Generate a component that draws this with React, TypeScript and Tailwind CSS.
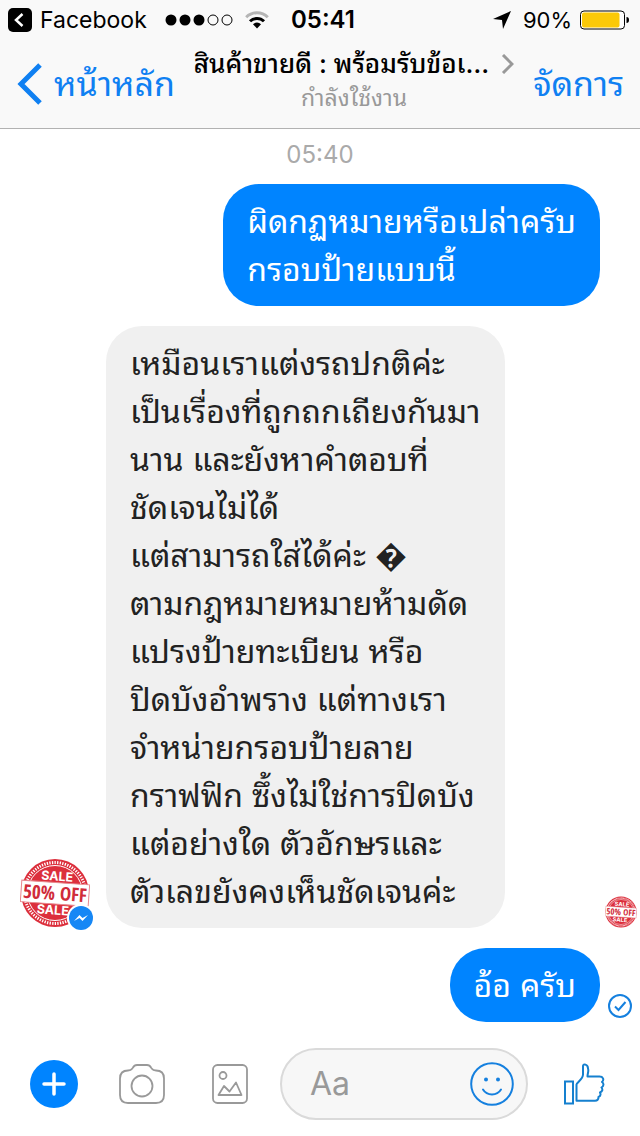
import type { ReactNode } from "react";

type Message = {
  id: number;
  from: "me" | "page";
  lines: string[];
};

const messages: Message[] = [
  { id: 1, from: "me", lines: ["ผิดกฏหมายหรือเปล่าครับ", "กรอบป้ายแบบนี้"] },
  {
    id: 2,
    from: "page",
    lines: [
      "เหมือนเราแต่งรถปกติค่ะ",
      "เป็นเรื่องที่ถูกถกเถียงกันมา",
      "นาน และยังหาคำตอบที่",
      "ชัดเจนไม่ได้",
      "แต่สามารถใส่ได้ค่ะ \uFFFD",
      "ตามกฎหมายหมายห้ามดัด",
      "แปรงป้ายทะเบียน หรือ",
      "ปิดบังอำพราง แต่ทางเรา",
      "จำหน่ายกรอบป้ายลาย",
      "กราฟฟิก ซึ้งไม่ใช่การปิดบัง",
      "แต่อย่างใด ตัวอักษรและ",
      "ตัวเลขยังคงเห็นชัดเจนค่ะ",
    ],
  },
  { id: 3, from: "me", lines: ["อ้อ ครับ"] },
];

function SaleAvatar({ className }: { className: string }) {
  return (
    <svg viewBox="0 0 70 70" className={className} role="img" aria-label="Sale">
      <circle cx="35" cy="35" r="34" fill="#dc2f3c" />
      <circle cx="35" cy="35" r="30.500" fill="none" stroke="#fff" strokeWidth="3" strokeDasharray="1.3 1.3" />
      <circle cx="35" cy="35" r="27.500" fill="none" stroke="#fff" strokeWidth="1" />
      <g transform="rotate(4 35 35)" fontFamily="Inter, sans-serif" fontWeight="700" textAnchor="middle">
        <text x="36" y="22.500" fontSize="12.500" fill="#fff">SALE</text>
        <text x="34" y="56.500" fontSize="12.500" fill="#fff">SALE</text>
        <rect x="1" y="24.500" width="68" height="21.500" fill="#fff" stroke="#e88a90" strokeWidth="1" />
        <text x="35" y="42" fontSize="19" fontFamily="Open Sans Condensed, Open Sans, sans-serif" fill="#d02c3a">50% OFF</text>
      </g>
    </svg>
  );
}

function Bubble({ message }: { message: Message }) {
  const color = message.from === "me" ? "bg-[#0084ff] text-white" : "bg-[#f0f0f0] text-[#222]";
  return (
    <div className={`rounded-[36px] px-6 pt-[14px] pb-3 text-[32px] leading-[48px] ${color}`}>
      {message.lines.map((line) => (
        <p key={line} className="whitespace-nowrap">{line}</p>
      ))}
    </div>
  );
}

function StatusBar() {
  return (
    <div className="grid h-10 grid-cols-[1fr_auto_1fr] items-center pr-[10px] pl-2 text-[23px] leading-none">
      <div className="flex items-center gap-2">
        <svg viewBox="0 0 24 24" className="size-6" aria-hidden="true">
          <rect width="24" height="24" rx="5" />
          <path d="M14.5 6 8 12l6.500 6" fill="none" stroke="#fff" strokeWidth="2.500" />
        </svg>
        <a href="#facebook">Facebook</a>
        <svg viewBox="0 0 68 12" className="ml-[10px] h-3 w-[68px]" aria-hidden="true">
          <circle cx="6" cy="6" r="5.500" />
          <circle cx="20" cy="6" r="5.500" />
          <circle cx="34" cy="6" r="5.500" />
          <circle cx="48" cy="6" r="5" fill="none" stroke="#000" />
          <circle cx="62" cy="6" r="5" fill="none" stroke="#000" />
        </svg>
        <svg viewBox="0 0 24 18" className="ml-1 h-[18px] w-6" fill="none" strokeWidth="3" aria-hidden="true">
          <path d="M1.200 6.300a15.300 15.300 0 0 1 21.600 0" stroke="#b5b5b5" />
          <path d="M5 10.300a9.900 9.900 0 0 1 14 0" stroke="#000" />
          <path d="M8 13.200a5.700 5.700 0 0 1 8 0L12 17.600z" fill="#000" />
        </svg>
      </div>
      <time className="pl-2 text-[24px] font-semibold">05:41</time>
      <div className="flex items-center justify-end gap-2">
        <svg viewBox="0 0 18 18" className="mr-1 size-[18px]" aria-hidden="true">
          <path d="M18 0 0 8l9 1 1 9z" />
        </svg>
        <span className="text-[22px]">90%</span>
        <svg viewBox="0 0 50 20" className="h-5 w-[50px]" aria-hidden="true">
          <rect x="0.500" y="1" width="44" height="18" rx="3.500" fill="#fff" stroke="#000" />
          <rect x="2" y="2.500" width="37.500" height="15" rx="2" fill="#fbc908" />
          <path d="M46.500 7q2.500 0 2.500 3t-2.500 3z" />
        </svg>
      </div>
    </div>
  );
}

function NavBar() {
  return (
    <nav className="flex h-[88px] items-center justify-between pr-4 pl-[17px] text-[#0f80f2]">
      <a href="#home" className="flex items-center gap-3 text-[34px] leading-[48px] whitespace-nowrap">
        <svg viewBox="0 0 25 42" className="h-[42px] w-[25px]" fill="none" stroke="currentColor" strokeWidth="5" aria-hidden="true">
          <path d="M23 2 4 21l19 19" />
        </svg>
        หน้าหลัก
      </a>
      <button type="button" className="flex flex-col items-center pb-2 whitespace-nowrap">
        <span className="flex items-center gap-3 text-[26px] leading-9 font-medium text-black">
          สินค้าขายดี : พร้อมรับข้อเ…
          <svg viewBox="0 0 13 20" className="h-5 w-[13px]" fill="none" stroke="#999" strokeWidth="3" aria-hidden="true">
            <path d="m2 1 9 9-9 9" />
          </svg>
        </span>
        <span className="text-[23px] leading-8 text-[#999]">กำลังใช้งาน</span>
      </button>
      <a href="#manage" className="text-[34px] leading-[48px] whitespace-nowrap">จัดการ</a>
    </nav>
  );
}

function IconButton({ label, className, children }: { label: string; className: string; children: ReactNode }) {
  return (
    <button type="button" aria-label={label} className={`flex h-12 shrink-0 items-center justify-center ${className}`}>
      {children}
    </button>
  );
}

function Composer() {
  return (
    <form className="flex items-center gap-[26px] pt-[26px] pr-[26px] pb-4 pl-[30px]">
      <IconButton label="More" className="w-12 rounded-full bg-[#0084ff]">
        <svg viewBox="0 0 24 24" className="size-6" stroke="#fff" strokeWidth="3.500" strokeLinecap="round">
          <path d="M12 2v20M2 12h20" />
        </svg>
      </IconButton>
      <IconButton label="Camera" className="w-[76px]">
        <svg viewBox="0 0 46 40" className="h-10 w-[46px]" fill="none" stroke="#999" strokeWidth="1.800">
          <path d="M9 6.500c3.500 0 3.500-1 5-3C15 1.500 16 1 18 1h10c2 0 3 .5 4 2.500 1.500 2 1.500 3 5 3 5 0 8 3 8 8V31c0 5-3 8-8 8H9c-5 0-8-3-8-8V14.500c0-5 3-8 8-8z" />
          <circle cx="23" cy="22" r="10.500" />
        </svg>
      </IconButton>
      <IconButton label="Photos" className="w-12">
        <svg viewBox="0 0 36 40" className="h-10 w-9" fill="none" stroke="#999" strokeWidth="1.800" strokeLinejoin="round">
          <rect x="1" y="1" width="34" height="38" rx="4.500" />
          <circle cx="11" cy="11.500" r="3.500" />
          <path d="m6.500 31 5.500-9 5.500 5.500L24 18.500 29.500 31z" />
        </svg>
      </IconButton>
      <div className="flex h-[72px] min-w-0 flex-1 items-center rounded-full border-2 border-[#dadada] bg-[#f7f7f7] pr-[10px] pl-7">
        <input
          type="text"
          aria-label="Message"
          placeholder="Aa"
          className="min-w-0 flex-1 bg-transparent text-[32px] leading-10 outline-none placeholder:text-[#999]"
        />
        <IconButton label="Emoji" className="w-12">
          <svg viewBox="0 0 44 44" className="size-11" fill="none" stroke="#1580df" strokeWidth="2" strokeLinecap="round">
            <circle cx="22" cy="22" r="20.800" />
            <circle cx="16" cy="17.500" r="2" fill="#1580df" stroke="none" />
            <circle cx="28" cy="17.500" r="2" fill="#1580df" stroke="none" />
            <path d="M13 27.500c4 6.500 14 6.500 18 0" />
          </svg>
        </IconButton>
      </div>
      <IconButton label="Like" className="w-[60px]">
        <svg viewBox="0 0 42 42" className="size-[42px]" fill="none" stroke="#1580cf" strokeWidth="2">
          <path d="M2 18.500h8v22H2z" />
          <path d="M13.500 37.800V21.500c0-2 6.500-5 6.500-10V3c0-2.500 5-2 5 2.500 1 3-.5 4.500-.5 8h12c3.500 0 5 3 2.500 5.500 2 1.500 2 4-.5 5.500 1.500 2 1 4-1.500 5 1 2 .5 3.500-1.500 4.500 0 2.500-1 3.800-3.500 3.800z" strokeLinejoin="round" />
        </svg>
      </IconButton>
    </form>
  );
}

export default function App() {
  return (
    <main className="bg-white font-['Inter','Thonburi','Noto_Sans_Thai_Looped','Loma','Garuda','Waree',sans-serif] text-black">
      <header className="border-b border-[#b2b2b2] bg-[#f9f9f9]">
        <StatusBar />
        <NavBar />
      </header>

      <section className="flex flex-col gap-5 pt-3">
        <time className="-mb-[5px] text-center text-[24px] leading-7 text-[#aaa]">05:40</time>

        <div className="flex justify-end pr-10">
          <Bubble message={messages[0]} />
        </div>

        <div className="flex items-end gap-4 pr-[3px] pl-5">
          <div className="relative shrink-0">
            <SaleAvatar className="size-[70px]" />
            <svg viewBox="0 0 28 28" className="absolute -right-[5px] -bottom-1 size-7" aria-hidden="true">
              <circle cx="14" cy="14" r="14" fill="#fff" />
              <circle cx="14" cy="14" r="12" fill="#1687f5" />
              <path d="m7 17 5.500-6 3 3 5.500-3-5.500 6-3-3z" fill="#fff" />
            </svg>
          </div>
          <Bubble message={messages[1]} />
          <SaleAvatar className="ml-auto size-8 shrink-0" />
        </div>

        <div className="flex items-end justify-end gap-2 pr-2">
          <Bubble message={messages[2]} />
          <svg viewBox="0 0 24 24" className="mb-1 size-6" fill="none" stroke="#1580df" strokeWidth="2" role="img" aria-label="Sent">
            <circle cx="12" cy="12" r="11" />
            <path d="m7 12.500 3.500 3.500 7-8" />
          </svg>
        </div>
      </section>

      <Composer />
    </main>
  );
}
